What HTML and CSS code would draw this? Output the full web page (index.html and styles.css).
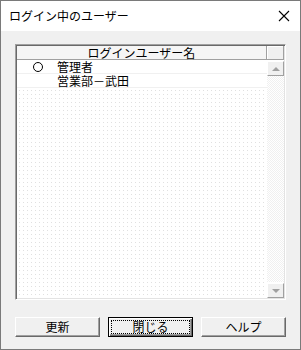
FILE: index.html
```html
<!DOCTYPE html>
<html lang="ja">
<head>
    <meta charset="UTF-8">
    <title>ログイン中のユーザー</title>
    <link rel="stylesheet" href="styles.css">
</head>
<body>
    <div class="window">
        <div class="titlebar">
            <span class="title">ログイン中のユーザー</span>
            <svg class="close" width="12" height="12" viewBox="0 0 12 12">
                <path d="M1 1L11 11M11 1L1 11" stroke="#000" stroke-width="1.1" fill="none"/>
            </svg>
        </div>
        <div class="content">
            <div class="listbox">
                <div class="list-main">
                    <div class="list-header">ログインユーザー名</div>
                    <div class="row">
                        <span class="mark"><span class="circle"></span></span>
                        <span class="name">管理者</span>
                    </div>
                    <div class="row">
                        <span class="mark"></span>
                        <span class="name">営業部－武田</span>
                    </div>
                    <div class="list-empty"></div>
                </div>
                <div class="scrollbar">
                    <div class="corner"></div>
                    <div class="sb-button"><span class="arrow-up"></span></div>
                    <div class="track"></div>
                    <div class="sb-button"><span class="arrow-down"></span></div>
                </div>
            </div>
            <div class="buttons">
                <button class="btn">更新</button>
                <button class="btn default"><span class="focus">閉じる</span></button>
                <button class="btn">ヘルプ</button>
            </div>
        </div>
    </div>
</body>
</html>
```

FILE: styles.css
```css
body {
    margin: 0;
    padding: 0;
    background-color: #ffffff;
    font-family: "Noto Sans CJK JP", "Noto Sans", sans-serif;
    font-size: 12px;
    color: #000000;
}
.window {
    width: 301px;
    height: 350px;
    box-sizing: border-box;
    border: 1px solid #7a7a7a;
    background-color: #f0f0f0;
    display: flex;
    flex-direction: column;
}
.titlebar {
    height: 30px;
    background-color: #ffffff;
    display: flex;
    align-items: center;
    justify-content: space-between;
    padding: 0 10px 0 8px;
    flex-shrink: 0;
}
.title {
    font-size: 12px;
    line-height: 14px;
}
.close {
    display: block;
}
.content {
    padding: 13px 14px 0 14px;
    display: flex;
    flex-direction: column;
}
.listbox {
    width: 271px;
    height: 256px;
    box-sizing: border-box;
    border-top: 1px solid #a0a0a0;
    border-left: 1px solid #a0a0a0;
    border-right: 1px solid #ffffff;
    border-bottom: 1px solid #ffffff;
    box-shadow: inset 1px 1px 0 #696969, inset -1px -1px 0 #e3e3e3;
    padding: 1px 1px 1px 1px;
    display: flex;
    background-color: #ffffff;
}
.list-main {
    flex: 1;
    display: flex;
    flex-direction: column;
}
.list-header {
    height: 13px;
    line-height: 13px;
    text-align: center;
    background-color: #f5f5f5;
    border-bottom: 1px solid #a0a0a0;
    border-right: 1px solid #a0a0a0;
}
.row {
    height: 13px;
    line-height: 13px;
    display: flex;
    align-items: center;
    border-bottom: 1px solid #f0f0f0;
    background-color: #ffffff;
}
.mark {
    width: 40px;
    display: flex;
    justify-content: center;
    align-items: center;
}
.circle {
    width: 8px;
    height: 8px;
    border: 1px solid #000000;
    border-radius: 50%;
    margin-left: 1px;
}
.name {
    padding-left: 0;
}
.list-empty {
    flex: 1;
    background: conic-gradient(at 1px 1px, #ffffff 75%, #e0e0e0 0) 2px 2px / 4px 4px;
}
.scrollbar {
    width: 17px;
    display: flex;
    flex-direction: column;
}
.corner {
    height: 13px;
    box-sizing: content-box;
    background-color: #f0f0f0;
    border: 1px solid #a0a0a0;
    border-top: none;
    border-left: none;
    box-shadow: inset 1px 1px 0 #ffffff;
}
.sb-button {
    height: 15px;
    box-sizing: border-box;
    background-color: #f0f0f0;
    border-top: 1px solid #ffffff;
    border-left: 1px solid #ffffff;
    border-right: 1px solid #a0a0a0;
    border-bottom: 1px solid #a0a0a0;
    display: flex;
    align-items: center;
    justify-content: center;
    margin-top: 1px;
}
.arrow-up {
    width: 0;
    height: 0;
    border-left: 4px solid transparent;
    border-right: 4px solid transparent;
    border-bottom: 4px solid #a0a0a0;
}
.arrow-down {
    width: 0;
    height: 0;
    border-left: 4px solid transparent;
    border-right: 4px solid transparent;
    border-top: 4px solid #a0a0a0;
}
.track {
    flex: 1;
    background: conic-gradient(#f0f0f0 25%, #ffffff 0 50%, #f0f0f0 0 75%, #ffffff 0) 0 0 / 2px 2px;
}
.buttons {
    display: flex;
    gap: 8px;
    margin-top: 17px;
    padding-left: 0;
}
.btn {
    width: 87px;
    height: 20px;
    box-sizing: border-box;
    font-family: "Noto Sans CJK JP", "Noto Sans", sans-serif;
    font-size: 12px;
    line-height: 14px;
    color: #000000;
    background-color: #f0f0f0;
    border-top: 1px solid #ffffff;
    border-left: 1px solid #ffffff;
    border-right: 1px solid #696969;
    border-bottom: 1px solid #696969;
    box-shadow: inset -1px -1px 0 #a0a0a0;
    padding: 0;
    display: flex;
    align-items: center;
    justify-content: center;
}
.btn.default {
    border: 1px solid #000000;
    box-shadow: inset 1px 1px 0 #ffffff, inset -1px -1px 0 #696969, inset -2px -2px 0 #a0a0a0;
    padding: 2px;
}
.focus {
    flex: 1;
    align-self: stretch;
    border: 1px dotted #000000;
    display: flex;
    align-items: center;
    justify-content: center;
}
```
